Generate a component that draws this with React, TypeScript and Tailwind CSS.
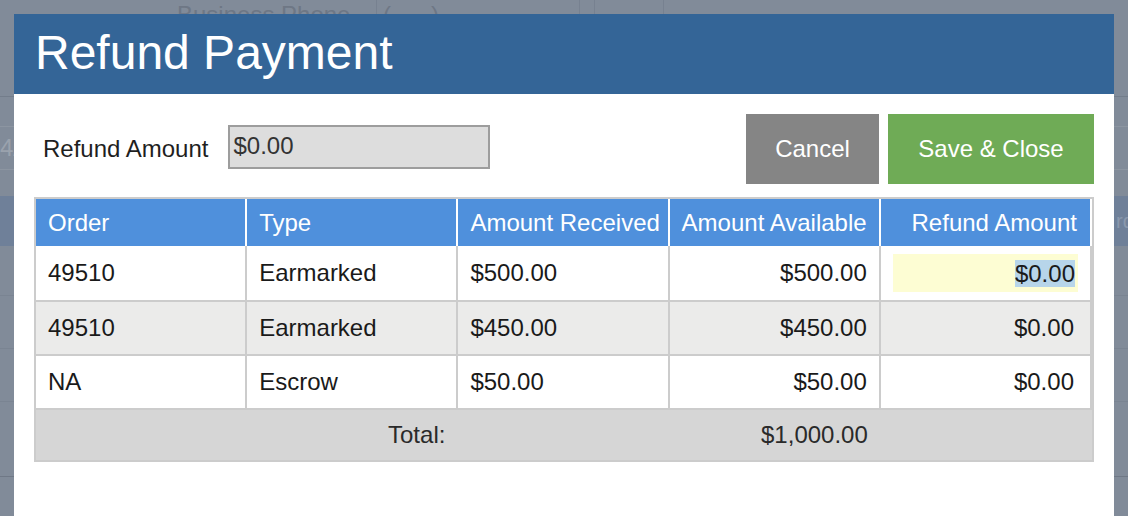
import React from "react";

type Row = {
  order: string;
  type: string;
  rec: string;
  avail: string;
  refund: string;
  bg: string;
  active?: boolean;
  first?: boolean;
};

const rows: Row[] = [
  { order: "49510", type: "Earmarked", rec: "$500.00", avail: "$500.00", refund: "$0.00", bg: "bg-white", active: true, first: true },
  { order: "49510", type: "Earmarked", rec: "$450.00", avail: "$450.00", refund: "$0.00", bg: "bg-[#ebebea]" },
  { order: "NA", type: "Escrow", rec: "$50.00", avail: "$50.00", refund: "$0.00", bg: "bg-white" },
];

export default function App() {
  return (
    <div className="relative h-[516px] w-full overflow-hidden bg-[#818b99] font-['Liberation_Sans',Arial,sans-serif]">
      {/* page behind the overlay */}
      <div className="flex flex-col">
        <div className="flex h-[97px] border-b border-[#737d8b]">
          <div className="w-[177px]" />
          <div className="w-[199px] whitespace-nowrap pt-[3px] text-[24px] leading-none text-[#6e7785]">Business Phone</div>
          <div className="w-[203px] whitespace-pre border-l border-[#778190] pl-[6px] pt-[3px] text-[24px] leading-none text-[#6e7785]">{"(      )"}</div>
          <div className="w-[15px] border-l border-[#778190]" />
          <div className="w-[69px] border-l border-[#778190]" />
          <div className="flex-1 border-l border-[#778190]" />
        </div>
        <div className="h-[30px] border-b border-[#8c95a1]" />
        <div className="flex h-[43px] items-center border-b border-[#8c95a1] text-[24px] leading-none text-[#9aa2ad]">4/</div>
        <div className="h-[26px]" />
        <div className="flex h-[50px] items-center whitespace-nowrap bg-[#6f8099] pl-[1116px] text-[20px] leading-none text-[#8a98ad]">rd</div>
        <div className="h-[50px] border-b border-[#7a8492]" />
        <div className="h-[53px] border-b border-[#7a8492]" />
        <div className="h-[53px] border-b border-[#7a8492]" />
        <div className="h-[75px] border-b border-[#6f7886]" />
      </div>

      {/* modal */}
      <div className="absolute bottom-0 left-[14px] right-[14px] top-[14px] bg-white">
        <div className="flex h-[80px] items-center bg-[#346597] pb-[2px] pl-[21px] text-[48px] leading-none text-white">
          Refund Payment
        </div>
        <div className="px-[20px] pt-[20px]">
          <div className="flex h-[70px] items-center">
            <span className="ml-[9px] text-[24px] leading-none text-[#1f1f1f]">Refund Amount</span>
            <div className="mb-[4px] ml-[20px] flex h-[44px] w-[262px] items-center border-2 border-[#9d9d9d] bg-[#dddddd] pb-[2px] pl-[3px] text-[24px] leading-none text-[#333333]">
              $0.00
            </div>
            <div className="ml-auto flex h-full gap-[9px]">
              <button className="w-[133px] bg-[#858585] text-[24px] leading-none text-white">Cancel</button>
              <button className="w-[206px] bg-[#6fab56] text-[24px] leading-none text-white">Save &amp; Close</button>
            </div>
          </div>

          <div className="mt-[13px] border-2 border-[#cccccc] text-[24px] leading-none">
            <div className="grid h-[47px] grid-cols-5 gap-[2px] bg-white pr-[2px] text-white">
              <div className="flex items-center bg-[#4f90dc] pl-[12px]">Order</div>
              <div className="flex items-center bg-[#4f90dc] pl-[12px]">Type</div>
              <div className="flex items-center bg-[#4f90dc] pl-[12px]">Amount Received</div>
              <div className="flex items-center bg-[#4f90dc] pl-[12px]">Amount Available</div>
              <div className="flex items-center justify-end bg-[#4f90dc] pr-[13px]">Refund Amount</div>
            </div>
            {rows.map((r, i) => (
              <div
                key={i}
                className={`grid grid-cols-5 gap-[2px] bg-[#cccccc] pr-[2px] text-[#1a1a1a] ${r.first ? "h-[54px]" : "h-[54px] border-t-2 border-[#cccccc]"}`}
              >
                <div className={`flex items-center pl-[12px] ${r.bg}`}>{r.order}</div>
                <div className={`flex items-center pl-[12px] ${r.bg}`}>{r.type}</div>
                <div className={`flex items-center pl-[12px] ${r.bg}`}>{r.rec}</div>
                <div className={`flex items-center justify-end pr-[12px] ${r.bg}`}>{r.avail}</div>
                {r.active ? (
                  <div className={`flex items-center px-[12px] ${r.bg}`}>
                    <div className="flex h-[38px] w-full items-center justify-end bg-[#fdfdd3] pr-[3px]">
                      <span className="bg-[#b7d5ea] leading-[27px]">{r.refund}</span>
                    </div>
                  </div>
                ) : (
                  <div className={`flex items-center justify-end pr-[16px] ${r.bg}`}>{r.refund}</div>
                )}
              </div>
            ))}
            <div className="grid h-[52px] grid-cols-5 gap-[2px] border-t-2 border-[#cccccc] bg-[#d6d6d6] pr-[2px] text-[#2a2a2a]">
              <div />
              <div className="flex items-center justify-end pr-[11px]">Total:</div>
              <div />
              <div className="flex items-center justify-end pr-[11px]">$1,000.00</div>
              <div />
            </div>
          </div>
        </div>
      </div>
    </div>
  );
}
